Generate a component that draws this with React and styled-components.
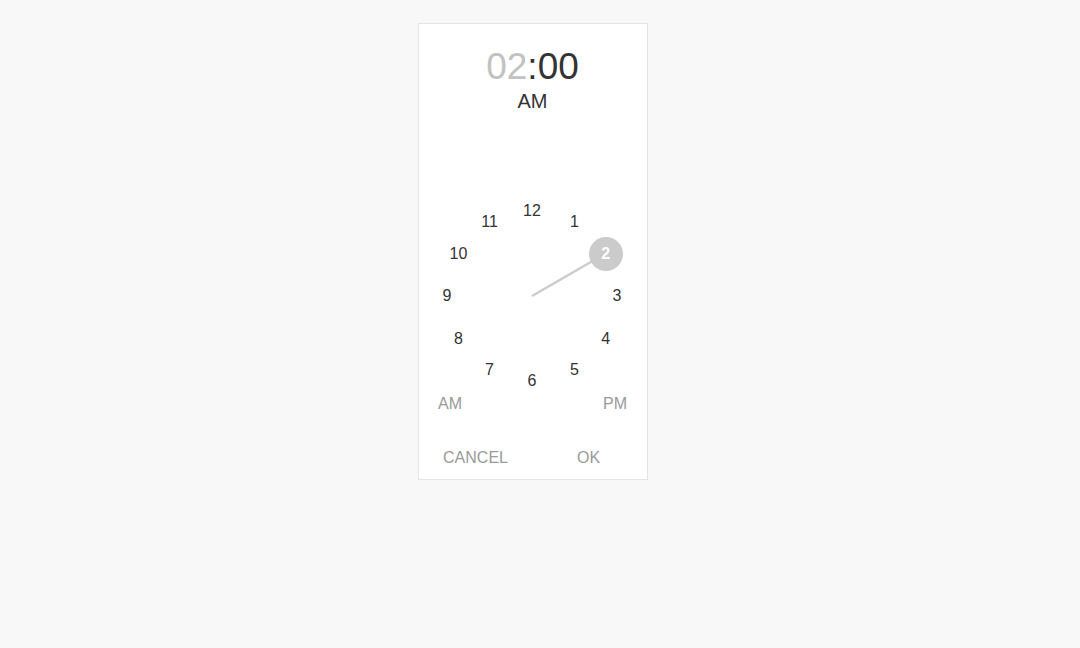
import React from "react";
import styled, { createGlobalStyle } from "styled-components";

const GlobalStyle = createGlobalStyle`
  html, body {
    margin: 0;
    padding: 0;
    background: #f8f8f8;
    font-family: "Liberation Sans", Arial, sans-serif;
  }
`;

const Page = styled.div`
  min-height: 648px;
  padding: 23px 0 0 418px;
  box-sizing: border-box;
`;

const Card = styled.div`
  width: 230px;
  box-sizing: border-box;
  background: #fff;
  border: 1px solid #e4e4e4;
  display: flex;
  flex-direction: column;
  padding-bottom: 13px;
`;

const Header = styled.div`
  padding-top: 24px;
  padding-right: 1px;
  text-align: center;
`;

const Time = styled.div`
  font-size: 37px;
  line-height: 37px;
  color: #333;
`;

const Part = styled.span`
  color: ${(p) => (p.active ? "#c2c2c2" : "#333")};
`;

const Meridiem = styled.div`
  margin-top: 5.5px;
  font-size: 20px;
  line-height: 20px;
  color: #333;
`;

const Face = styled.div`
  position: relative;
  width: 180px;
  height: 180px;
  margin: 95.5px 0 0 23px;
`;

const Hand = styled.svg`
  position: absolute;
  left: 0;
  top: 0;
  overflow: visible;
`;

const Selector = styled.div`
  position: absolute;
  width: 34px;
  height: 34px;
  border-radius: 50%;
  background: #cbcbcb;
  transform: translate(-50%, -50%);
`;

const Num = styled.span`
  position: absolute;
  transform: translate(-50%, -50%);
  font-size: 16px;
  line-height: 16px;
  color: ${(p) => (p.selected ? "#fff" : "#333")};
  font-weight: ${(p) => (p.selected ? "bold" : "normal")};
  white-space: nowrap;
`;

const PeriodRow = styled.div`
  margin-top: 9.5px;
  padding: 0 20px 0 19px;
  display: flex;
  justify-content: space-between;
`;

const Period = styled.span`
  font-size: 16px;
  line-height: 16px;
  color: #9a9a9a;
`;

const Actions = styled.div`
  margin-top: 38.5px;
  padding-right: 2px;
  display: flex;
`;

const Action = styled.button`
  flex: 1;
  border: none;
  background: none;
  padding: 0;
  font-family: inherit;
  font-size: 16px;
  line-height: 16px;
  color: #9a9a9a;
  text-align: center;
  cursor: pointer;
`;

const R = 85;
const C = 90;
const hour = 2;

const pos = (h) => {
  const a = (h * Math.PI) / 6;
  return { left: C + R * Math.sin(a), top: C - R * Math.cos(a) };
};

export default function App() {
  const hp = pos(hour);
  return (
    <Page>
      <GlobalStyle />
      <Card>
        <Header>
          <Time>
            <Part active>02</Part>:<Part>00</Part>
          </Time>
          <Meridiem>AM</Meridiem>
        </Header>
        <Face>
          <Hand width="180" height="180">
            <line
              x1={C}
              y1={C}
              x2={hp.left}
              y2={hp.top}
              stroke="#cdcdcd"
              strokeWidth="2.5"
            />
          </Hand>
          <Selector style={{ left: hp.left, top: hp.top }} />
          {[12, 1, 2, 3, 4, 5, 6, 7, 8, 9, 10, 11].map((h) => {
            const p = pos(h);
            return (
              <Num key={h} selected={h === hour} style={{ left: p.left, top: p.top }}>
                {h}
              </Num>
            );
          })}
        </Face>
        <PeriodRow>
          <Period>AM</Period>
          <Period>PM</Period>
        </PeriodRow>
        <Actions>
          <Action>CANCEL</Action>
          <Action>OK</Action>
        </Actions>
      </Card>
    </Page>
  );
}
